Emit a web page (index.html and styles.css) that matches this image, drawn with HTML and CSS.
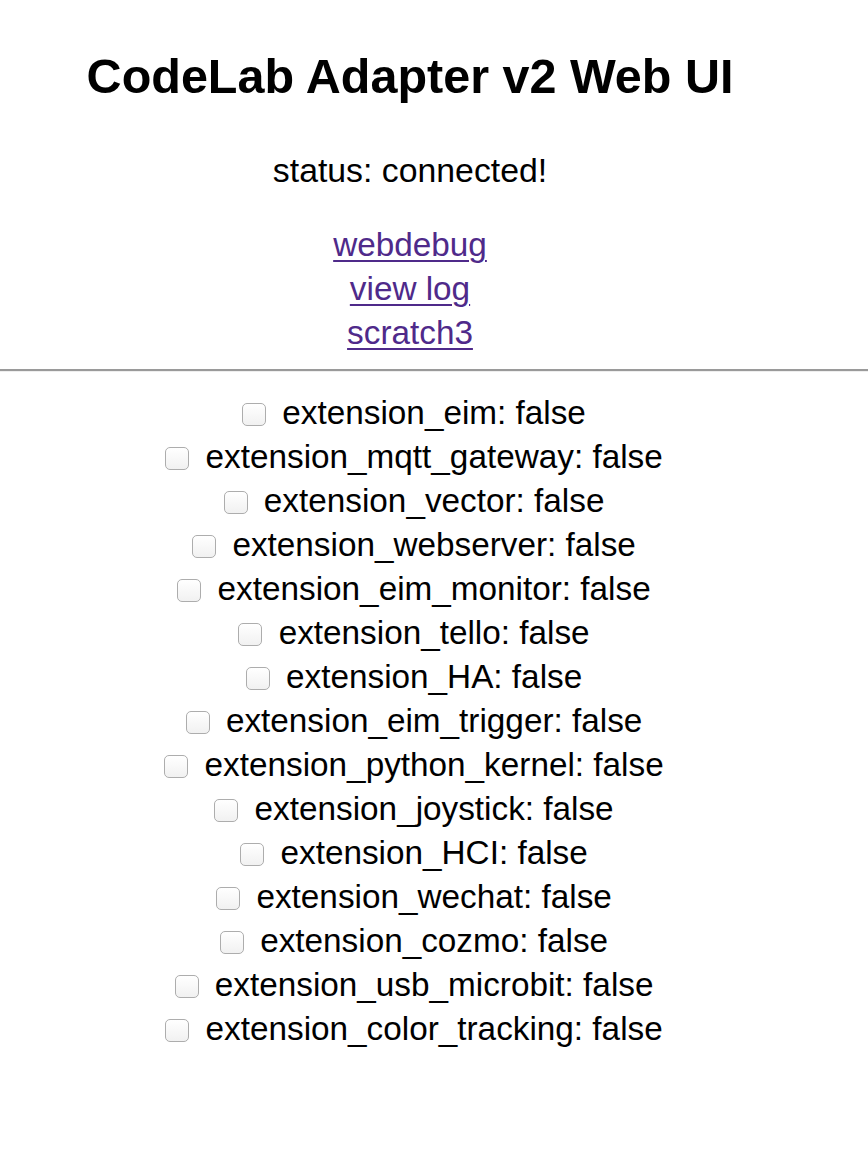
FILE: index.html
```html
<!DOCTYPE html>
<html lang="en">
<head>
<meta charset="utf-8">
<title>CodeLab Adapter v2 Web UI</title>
<link rel="stylesheet" href="styles.css">
</head>
<body>
<section class="page">
  <h1 class="title">CodeLab Adapter v2 Web UI</h1>
  <p class="status">status: connected!</p>
  <nav class="links">
    <a href="#webdebug">webdebug</a>
    <a href="#log">view log</a>
    <a href="#scratch3">scratch3</a>
  </nav>
</section>
<hr class="divider">
<section class="page">
  <div class="extensions">
    <label class="ext"><input type="checkbox" class="box"> extension_eim: false</label>
    <label class="ext"><input type="checkbox" class="box"> extension_mqtt_gateway: false</label>
    <label class="ext"><input type="checkbox" class="box"> extension_vector: false</label>
    <label class="ext"><input type="checkbox" class="box"> extension_webserver: false</label>
    <label class="ext"><input type="checkbox" class="box"> extension_eim_monitor: false</label>
    <label class="ext"><input type="checkbox" class="box"> extension_tello: false</label>
    <label class="ext"><input type="checkbox" class="box"> extension_HA: false</label>
    <label class="ext"><input type="checkbox" class="box"> extension_eim_trigger: false</label>
    <label class="ext"><input type="checkbox" class="box"> extension_python_kernel: false</label>
    <label class="ext"><input type="checkbox" class="box"> extension_joystick: false</label>
    <label class="ext"><input type="checkbox" class="box"> extension_HCI: false</label>
    <label class="ext"><input type="checkbox" class="box"> extension_wechat: false</label>
    <label class="ext"><input type="checkbox" class="box"> extension_cozmo: false</label>
    <label class="ext"><input type="checkbox" class="box"> extension_usb_microbit: false</label>
    <label class="ext"><input type="checkbox" class="box"> extension_color_tracking: false</label>
  </div>
</section>
</body>
</html>
```
FILE: styles.css
```css
html, body {
  margin: 0;
  padding: 0;
  background: #ffffff;
}

body {
  font-family: "Liberation Sans", Arial, Helvetica, sans-serif;
  color: #000000;
  font-size: 33.3px;
}

.page {
  width: 820px;
  text-align: center;
}

.title {
  margin: 48px 0 0;
  font-size: 48.5px;
  line-height: 56px;
  font-weight: bold;
}

.status {
  margin: 44px 0 0;
  font-size: 33.8px;
  line-height: 44px;
}

.links {
  margin-top: 31px;
  display: flex;
  flex-direction: column;
  align-items: center;
}

.links a {
  line-height: 44px;
  color: #4f2a8a;
  text-decoration: underline;
  text-decoration-thickness: 2px;
  text-underline-offset: 4px;
}

.divider {
  margin: 14px 0 0;
  height: 0;
  border: 0;
  border-top: 2px solid #9a9a9a;
  border-bottom: 1px solid #eeeeee;
}

.extensions {
  margin-top: 19px;
  display: flex;
  flex-direction: column;
  align-items: center;
}

.ext {
  display: block;
  line-height: 44px;
  white-space: nowrap;
}

.box {
  appearance: none;
  -webkit-appearance: none;
  box-sizing: border-box;
  width: 24px;
  height: 23px;
  margin: 0 7px 0 8px;
  border: 1px solid #adadad;
  border-radius: 5px;
  background: linear-gradient(#ffffff, #f1f1f1);
  vertical-align: middle;
  position: relative;
  top: -1px;
}
```
